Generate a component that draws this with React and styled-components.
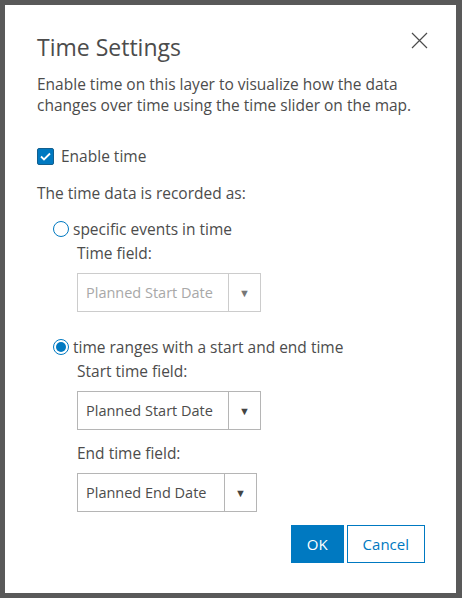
import React from "react";
import styled, { createGlobalStyle } from "styled-components";

const GlobalStyle = createGlobalStyle`
  html, body {
    margin: 0;
    padding: 0;
    background: #595959;
  }
  body {
    font-family: "Open Sans", Lato, sans-serif;
    color: #4c4c4c;
  }
`;

const Dialog = styled.div`
  box-sizing: border-box;
  margin: 5px 6px 0 5px;
  width: 451px;
  height: 588px;
  background: #fff;
  padding: 26px 32px 0 32px;
  display: flex;
  flex-direction: column;
`;

const Header = styled.div`
  display: flex;
  justify-content: space-between;
  align-items: flex-start;
`;

const Title = styled.h2`
  margin: 0;
  font-size: 23px;
  line-height: 32px;
  font-weight: 400;
  color: #4c4c4c;
`;

const CloseButton = styled.button`
  border: 0;
  background: none;
  padding: 0;
  margin: 1px -4px 0 0;
  width: 17px;
  height: 17px;
  cursor: pointer;
  display: flex;
`;

const Description = styled.p`
  margin: 11px 0 0;
  font-size: 15.5px;
  line-height: 21px;
`;

const Text = styled.div`
  font-size: 15.5px;
  line-height: 20px;
  margin-top: ${(p) => p.$top || 0}px;
  padding-left: ${(p) => p.$indent || 0}px;
`;

const CheckRow = styled.label`
  display: flex;
  align-items: center;
  gap: 7px;
  margin-top: 30px;
  font-size: 15.5px;
  line-height: 20px;
`;

const CheckBox = styled.span`
  box-sizing: border-box;
  width: 17px;
  height: 17px;
  border-radius: 2px;
  background: #0079c1;
  border: 1px solid #135f8e;
  display: flex;
  align-items: center;
  justify-content: center;
`;

const RadioRow = styled.label`
  display: flex;
  align-items: center;
  gap: 4px;
  margin-top: ${(p) => p.$top}px;
  padding-left: 16px;
  font-size: 15.5px;
  line-height: 20px;
`;

const RadioCircle = styled.span`
  box-sizing: border-box;
  width: 16px;
  height: 16px;
  border-radius: 50%;
  border: 1.5px solid #0079c1;
  background: #fff;
  display: flex;
  align-items: center;
  justify-content: center;
  &::after {
    content: "";
    width: 10px;
    height: 10px;
    border-radius: 50%;
    background: ${(p) => (p.$checked ? "#0079c1" : "transparent")};
  }
`;

const Select = styled.div`
  box-sizing: border-box;
  margin-top: ${(p) => p.$top}px;
  margin-left: 40px;
  width: ${(p) => p.$width}px;
  height: 39px;
  border: 1px solid ${(p) => (p.$disabled ? "#cccccc" : "#b5b5b5")};
  display: flex;
  align-items: stretch;
  font-size: 14.5px;
  color: ${(p) => (p.$disabled ? "#a8a8a8" : "#4c4c4c")};
`;

const SelectValue = styled.span`
  flex: 1;
  display: flex;
  align-items: center;
  padding-left: 8px;
  white-space: nowrap;
`;

const SelectArrow = styled.span`
  width: 31px;
  border-left: 1px solid ${(p) => (p.$disabled ? "#cccccc" : "#b5b5b5")};
  display: flex;
  align-items: center;
  justify-content: center;
  font-size: 11px;
  color: ${(p) => (p.$disabled ? "#777" : "#444")};
`;

const Footer = styled.div`
  display: flex;
  justify-content: flex-end;
  gap: 3px;
  margin-top: 13px;
  margin-right: -1px;
`;

const Button = styled.button`
  box-sizing: border-box;
  height: 38px;
  padding: 0 15px;
  font-family: inherit;
  font-size: 15px;
  border: 1px solid #0079c1;
  background: ${(p) => (p.$primary ? "#0079c1" : "#fff")};
  color: ${(p) => (p.$primary ? "#fff" : "#0079c1")};
  cursor: pointer;
`;

function Dropdown({ value, width, top, disabled }) {
  return (
    <Select $width={width} $top={top} $disabled={disabled}>
      <SelectValue>{value}</SelectValue>
      <SelectArrow $disabled={disabled}>▼</SelectArrow>
    </Select>
  );
}

export default function App() {
  return (
    <>
      <GlobalStyle />
      <Dialog>
        <Header>
          <Title>Time Settings</Title>
          <CloseButton aria-label="Close">
            <svg width="17" height="17" viewBox="0 0 17 17">
              <path d="M1 1L16 16M16 1L1 16" stroke="#4c4c4c" strokeWidth="1.2" />
            </svg>
          </CloseButton>
        </Header>
        <Description>
          Enable time on this layer to visualize how the data changes over time
          using the time slider on the map.
        </Description>
        <CheckRow>
          <CheckBox>
            <svg width="11" height="9" viewBox="0 0 11 9">
              <path d="M1 4.5L4 7.5L10 1.5" stroke="#fff" strokeWidth="1.8" fill="none" />
            </svg>
          </CheckBox>
          Enable time
        </CheckRow>
        <Text $top={17}>The time data is recorded as:</Text>
        <RadioRow $top={16}>
          <RadioCircle />
          specific events in time
        </RadioRow>
        <Text $top={4} $indent={40}>Time field:</Text>
        <Dropdown value="Planned Start Date" width={184} top={10} disabled />
        <RadioRow $top={25}>
          <RadioCircle $checked />
          time ranges with a start and end time
        </RadioRow>
        <Text $top={4} $indent={40}>Start time field:</Text>
        <Dropdown value="Planned Start Date" width={184} top={10} />
        <Text $top={13} $indent={40}>End time field:</Text>
        <Dropdown value="Planned End Date" width={180} top={10} />
        <Footer>
          <Button $primary>OK</Button>
          <Button>Cancel</Button>
        </Footer>
      </Dialog>
    </>
  );
}
